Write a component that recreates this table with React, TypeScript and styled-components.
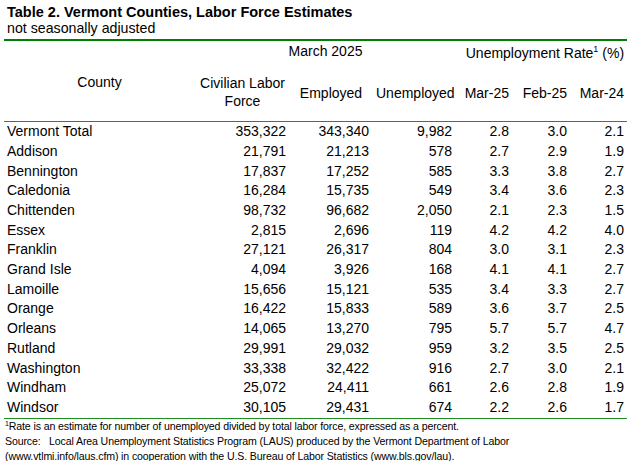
import React from "react";
import styled, { createGlobalStyle } from "styled-components";

const Global = createGlobalStyle`
  html, body { margin: 0; padding: 0; background: #ffffff; }
  body { font-family: "Liberation Sans", Arial, sans-serif; color: #000; }
`;

const Page = styled.div`
  width: 623px;
  padding: 4px 0 0 4px;
`;

const Title = styled.div`
  font-size: 14.5px;
  font-weight: bold;
  line-height: 16px;
  padding-left: 3px;
`;

const Subtitle = styled.div`
  font-size: 14.2px;
  line-height: 16px;
  padding-left: 3px;
`;

const Table = styled.table`
  margin-top: 3px;
  width: 623px;
  table-layout: fixed;
  border-collapse: collapse;
  border-top: 2px solid #008000;
  font-size: 14px;
`;

const HeadRow = styled.tr<{ $h: number; $rule?: boolean }>`
  height: ${(p) => p.$h}px;
  ${(p) => (p.$rule ? "border-bottom: 1px solid #1f8f1f;" : "")}
`;

const Th = styled.th<{ $align?: string; $valign?: string; $pt?: number; $pr?: number }>`
  font-weight: normal;
  padding: ${(p) => p.$pt ?? 0}px ${(p) => p.$pr ?? 4}px 0 3px;
  text-align: ${(p) => p.$align ?? "center"};
  vertical-align: ${(p) => p.$valign ?? "middle"};
  line-height: 18px;
  white-space: nowrap;
`;

const Sup = styled.sup`
  font-size: 9px;
  line-height: 0;
  vertical-align: 6px;
`;

const BodyRow = styled.tr<{ $last?: boolean }>`
  height: 19.7px;
  ${(p) => (p.$last ? "border-bottom: 1px solid #1f8f1f;" : "")}
`;

const NameCell = styled.td`
  padding: 0 0 0 3px;
  text-align: left;
  line-height: 19.7px;
  white-space: nowrap;
`;

const NumCell = styled.td<{ $pr?: number }>`
  padding: 0 ${(p) => p.$pr ?? 4}px 0 0;
  text-align: right;
  line-height: 19.7px;
  white-space: nowrap;
`;

const Notes = styled.div`
  font-size: 10.6px;
  letter-spacing: -0.13px;
  line-height: 15px;
  padding-left: 1px;
`;

const NoteLine = styled.div`
  white-space: pre;
`;

const NoteSup = styled.sup`
  font-size: 7px;
  line-height: 0;
  vertical-align: 4px;
`;

type Row = [string, string, string, string, string, string, string];

const rows: Row[] = [
  ["Vermont Total", "353,322", "343,340", "9,982", "2.8", "3.0", "2.1"],
  ["Addison", "21,791", "21,213", "578", "2.7", "2.9", "1.9"],
  ["Bennington", "17,837", "17,252", "585", "3.3", "3.8", "2.7"],
  ["Caledonia", "16,284", "15,735", "549", "3.4", "3.6", "2.3"],
  ["Chittenden", "98,732", "96,682", "2,050", "2.1", "2.3", "1.5"],
  ["Essex", "2,815", "2,696", "119", "4.2", "4.2", "4.0"],
  ["Franklin", "27,121", "26,317", "804", "3.0", "3.1", "2.3"],
  ["Grand Isle", "4,094", "3,926", "168", "4.1", "4.1", "2.7"],
  ["Lamoille", "15,656", "15,121", "535", "3.4", "3.3", "2.7"],
  ["Orange", "16,422", "15,833", "589", "3.6", "3.7", "2.5"],
  ["Orleans", "14,065", "13,270", "795", "5.7", "5.7", "4.7"],
  ["Rutland", "29,991", "29,032", "959", "3.2", "3.5", "2.5"],
  ["Washington", "33,338", "32,422", "916", "2.7", "3.0", "2.1"],
  ["Windham", "25,072", "24,411", "661", "2.6", "2.8", "1.9"],
  ["Windsor", "30,105", "29,431", "674", "2.2", "2.6", "1.7"],
];

const widths = [192, 94, 83, 83, 57, 58, 56];

export default function App() {
  return (
    <>
      <Global />
      <Page>
        <Title>Table 2. Vermont Counties, Labor Force Estimates</Title>
        <Subtitle>not seasonally adjusted</Subtitle>
        <Table>
          <colgroup>
            {widths.map((w, i) => (
              <col key={i} style={{ width: w }} />
            ))}
          </colgroup>
          <thead>
            <HeadRow $h={23}>
              <Th rowSpan={2} $pt={2}>County</Th>
              <Th colSpan={3} $valign="top" $pt={1}>March 2025</Th>
              <Th colSpan={3} $align="right" $valign="top" $pt={3} $pr={3}>
                Unemployment Rate<Sup>1</Sup> (%)
              </Th>
            </HeadRow>
            <HeadRow $h={58.6} $rule>
              <Th>
                Civilian Labor
                <br />
                Force
              </Th>
              <Th $pt={2}>Employed</Th>
              <Th $align="right" $pt={2}>Unemployed</Th>
              <Th $align="right" $pt={2}>Mar-25</Th>
              <Th $align="right" $pt={2}>Feb-25</Th>
              <Th $align="right" $pt={2} $pr={3}>Mar-24</Th>
            </HeadRow>
          </thead>
          <tbody>
            {rows.map((r, i) => (
              <BodyRow key={r[0]} $last={i === rows.length - 1}>
                <NameCell>{r[0]}</NameCell>
                {r.slice(1).map((v, j) => (
                  <NumCell key={j} $pr={j === 5 ? 3 : 4}>
                    {v}
                  </NumCell>
                ))}
              </BodyRow>
            ))}
          </tbody>
        </Table>
        <Notes>
          <NoteLine>
            <NoteSup>1</NoteSup>Rate is an estimate for number of unemployed divided by total labor force, expressed as a percent.
          </NoteLine>
          <NoteLine>Source:   Local Area Unemployment Statistics Program (LAUS) produced by the Vermont Department of Labor</NoteLine>
          <NoteLine>(www.vtlmi.info/laus.cfm) in cooperation with the U.S. Bureau of Labor Statistics (www.bls.gov/lau).</NoteLine>
        </Notes>
      </Page>
    </>
  );
}
